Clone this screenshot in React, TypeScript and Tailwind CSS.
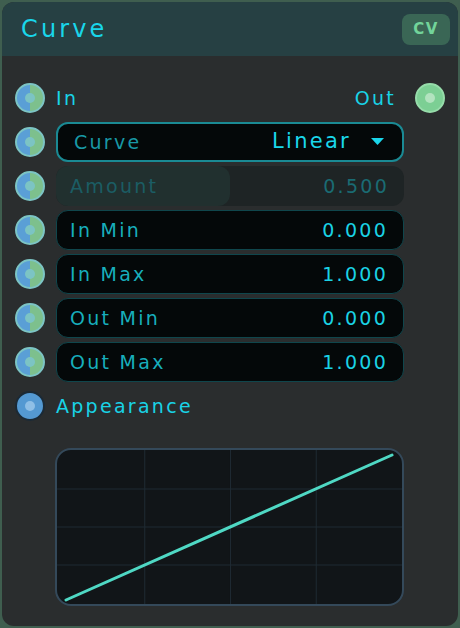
import React from "react"

const font = { fontFamily: '"DejaVu Sans", "Open Sans", sans-serif' }

function Socket({ kind = "split" }: { kind?: "split" | "out" | "blue" }) {
  if (kind === "out") {
    return (
      <div className="flex h-[30px] w-[30px] items-center justify-center rounded-full border-2 border-[#96dcaa] bg-[#7ccf94]">
        <div className="h-[10px] w-[10px] rounded-full bg-[#b2e3bf]" />
      </div>
    )
  }
  if (kind === "blue") {
    return (
      <div className="flex h-[30px] w-[30px] items-center justify-center rounded-full border-2 border-[#1b2a36] bg-[#5499d2]">
        <div className="h-[10px] w-[10px] rounded-full bg-[#8fbfe6]" />
      </div>
    )
  }
  return (
    <div className="relative flex h-[30px] w-[30px] items-center justify-center overflow-hidden rounded-full border-2 border-[#7cc4c4] bg-[linear-gradient(90deg,#5a9fd6_50%,#7dc08d_50%)]">
      <div className="h-[10px] w-[10px] rounded-full bg-[#7cc4c4]" />
    </div>
  )
}

function Row({ children }: { children: React.ReactNode }) {
  return (
    <div className="flex h-[40px] items-center gap-[11px]">
      <Socket />
      {children}
    </div>
  )
}

function Field({ label, value }: { label: string; value: string }) {
  return (
    <div className="flex h-[40px] flex-1 items-center justify-between rounded-[12px] border border-[#0f464c] bg-[#040809] pl-[13px] pr-[15px] text-[19px] tracking-[0.12em]">
      <span className="text-[#17aebc]">{label}</span>
      <span className="text-[#1ad2e4]">{value}</span>
    </div>
  )
}

export default function App() {
  return (
    <div style={font} className="h-[628px] w-[460px] overflow-hidden bg-[#3f5e4f] p-[2px]">
      <div className="flex h-full flex-col overflow-hidden rounded-[12px] bg-[#2a2d2e]">
        <div className="flex h-[54px] items-center justify-between bg-[#264043] pl-[19px] pr-[8px]">
          <span className="text-[24px] tracking-[0.13em] text-[#19d6ea]">Curve</span>
          <span className="flex h-[31px] w-[48px] items-center justify-center rounded-[8px] bg-[#3a6655] text-[15px] font-bold tracking-[0.1em] text-[#72d49a]">
            CV
          </span>
        </div>

        <div className="flex flex-col gap-[4px] pl-[13px] pr-[13px] pt-[22px]">
          <div className="flex h-[40px] items-center gap-[11px]">
            <Socket />
            <span className="flex-1 text-[19px] tracking-[0.12em] text-[#19d3e6]">In</span>
            <span className="text-[19px] tracking-[0.12em] text-[#19d3e6]">Out</span>
            <div className="ml-[8px]">
              <Socket kind="out" />
            </div>
          </div>

          <Row>
            <div className="mr-[41px] flex h-[40px] flex-1 items-center justify-between rounded-[12px] border-2 border-[#1a8a94] bg-[#040809] pl-[16px] pr-[18px] text-[19px] tracking-[0.12em]">
              <span className="text-[#1898a6]">Curve</span>
              <span className="flex items-center gap-[20px] text-[21px] text-[#1ad6ea]">
                Linear
                <svg width="13" height="8" viewBox="0 0 13 8">
                  <path d="M0 0 H13 L6.5 7 Z" fill="#1ad6ea" />
                </svg>
              </span>
            </div>
          </Row>

          <Row>
            <div className="relative mr-[41px] flex h-[40px] flex-1 items-center justify-between overflow-hidden rounded-[12px] bg-[#1e2425] pl-[14px] pr-[15px] text-[19px] tracking-[0.12em]">
              <div className="absolute inset-y-0 left-0 w-1/2 rounded-r-[12px] bg-[#21302f]" />
              <span className="relative text-[#1b5d64]">Amount</span>
              <span className="relative text-[#1a6b73]">0.500</span>
            </div>
          </Row>

          {[
            ["In Min", "0.000"],
            ["In Max", "1.000"],
            ["Out Min", "0.000"],
            ["Out Max", "1.000"],
          ].map(([l, v]) => (
            <Row key={l}>
              <div className="mr-[41px] flex flex-1">
                <Field label={l} value={v} />
              </div>
            </Row>
          ))}

          <div className="flex h-[40px] items-center gap-[11px]">
            <Socket kind="blue" />
            <span className="text-[19px] tracking-[0.12em] text-[#19d3e6]">Appearance</span>
          </div>

          <div className="ml-[40px] mr-[41px] mt-[18px] h-[158px] overflow-hidden rounded-[16px] border-2 border-[#34495a] bg-[#111518]">
            <svg width="100%" height="100%" viewBox="0 0 346 154" preserveAspectRatio="none">
              {[88, 174, 260].map((x) => (
                <line key={x} x1={x} y1="0" x2={x} y2="154" stroke="#1f2a33" strokeWidth="1" />
              ))}
              {[39, 77, 115].map((y) => (
                <line key={y} x1="0" y1={y} x2="346" y2={y} stroke="#1f2a33" strokeWidth="1" />
              ))}
              <line x1="9" y1="150" x2="336" y2="5" stroke="#4fd8c4" strokeWidth="3" strokeLinecap="round" />
            </svg>
          </div>
        </div>
      </div>
    </div>
  )
}
